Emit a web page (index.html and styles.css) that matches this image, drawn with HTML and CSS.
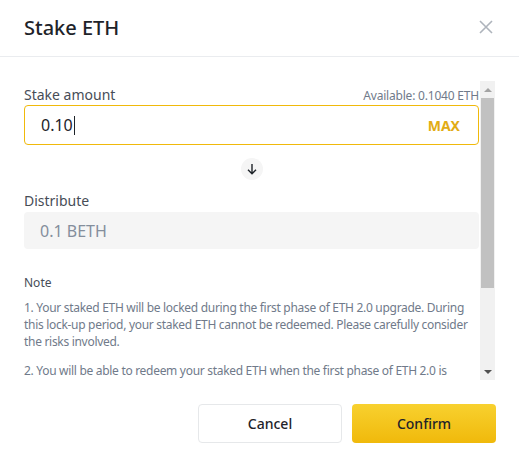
FILE: index.html
```html
<!DOCTYPE html>
<html lang="en">
<head>
<meta charset="utf-8">
<title>Stake ETH</title>
<link rel="stylesheet" href="styles.css">
</head>
<body>
<div class="dialog">
  <div class="header">
    <div class="title">Stake ETH</div>
    <svg class="close" width="14" height="14" viewBox="0 0 14 14"><path d="M1 1L13 13M13 1L1 13" stroke="#aeb4bc" stroke-width="1.6" fill="none"/></svg>
  </div>
  <div class="scroll-area">
    <div class="body">
      <div class="label-row">
        <span class="label">Stake amount</span>
        <span class="avail">Available: 0.1040 ETH</span>
      </div>
      <div class="input active">
        <span class="value">0.10<span class="caret"></span></span>
        <span class="max">MAX</span>
      </div>
      <div class="arrow-row">
        <div class="arrow">
          <svg width="12" height="12" viewBox="0 0 12 12"><path d="M6 1V10.5M2 6.8L6 10.8L10 6.8" stroke="#1e2329" stroke-width="1.4" fill="none"/></svg>
        </div>
      </div>
      <div class="label dist-label">Distribute</div>
      <div class="input readonly">0.1 BETH</div>
      <div class="note-title">Note</div>
      <p class="note first">1. Your staked ETH will be locked during the first phase of ETH 2.0 upgrade. During this lock-up period, your staked ETH cannot be redeemed. Please carefully consider the risks involved.</p>
      <p class="note">2. You will be able to redeem your staked ETH when the first phase of ETH 2.0 is completed. BETH will be distributed to your spot wallet at a 1:1 ratio.</p>
    </div>
    <div class="scrollbar">
      <div class="sb-btn"><span class="tri up"></span></div>
      <div class="sb-track"><div class="sb-thumb"></div></div>
      <div class="sb-btn"><span class="tri down"></span></div>
    </div>
  </div>
  <div class="footer">
    <button class="btn cancel">Cancel</button>
    <button class="btn confirm">Confirm</button>
  </div>
</div>
</body>
</html>
```
FILE: styles.css
```css
* { box-sizing: border-box; }
html, body { margin: 0; padding: 0; background: #fff; }
body { font-family: "Noto Sans", "Open Sans", sans-serif; color: #1e2329; }
.dialog { width: 519px; height: 465px; display: flex; flex-direction: column; }
.header {
  height: 57px; border-bottom: 1px solid #eaecef;
  display: flex; align-items: center; justify-content: space-between;
  padding: 0 26px 2px 24px;
}
.title { font-size: 20px; font-weight: 500; color: #1e2329; }
.close { display: block; }
.scroll-area { margin-top: 24px; height: 299px; display: flex; }
.body {
  width: 480px; height: 299px; overflow: hidden; padding: 4px 0 0 24px;
}
.label-row { display: flex; justify-content: space-between; align-items: flex-end; height: 20px; padding-right: 1px; }
.label { font-size: 14px; color: #474d57; line-height: 20px; }
.avail { font-size: 12px; color: #707a8a; line-height: 18px; letter-spacing: -0.2px; }
.input {
  height: 40px; border-radius: 4px; display: flex; align-items: center;
  justify-content: space-between; padding: 0 18px 0 16px; font-size: 16px;
  margin-right: 1px;
}
.input.active { border: 1px solid #f0b90b; }
.value { color: #1e2329; display: flex; align-items: center; }
.caret { display: inline-block; width: 1px; height: 19px; background: #1e2329; margin-left: 1px; }
.max { font-size: 14px; font-weight: 700; color: #e2ac14; }
.arrow-row { display: flex; justify-content: center; padding: 13px 0 11px; }
.arrow {
  width: 22px; height: 22px; border-radius: 50%; background: #f5f5f5;
  display: flex; align-items: center; justify-content: center;
}
.dist-label { margin-bottom: 1px; }
.input.readonly { background: #f5f5f5; height: 37px; padding-left: 16px; color: #848e9c; border: 0; }
.note-title { font-size: 12px; color: #474d57; margin-top: 26px; line-height: 16px; }
.note { font-size: 12px; color: #707a8a; line-height: 17px; margin: 12px 0 0; letter-spacing: -0.3px; padding-right: 1px; }
.note.first { margin-top: 8px; }
.scrollbar { width: 15px; height: 299px; background: #f1f1f1; display: flex; flex-direction: column; }
.sb-btn { height: 17px; display: flex; align-items: center; justify-content: center; }
.sb-track { flex: 1; padding: 0 1px; }
.sb-thumb { height: 190px; background: #c1c1c1; }
.tri { width: 0; height: 0; border-left: 4px solid transparent; border-right: 4px solid transparent; }
.tri.up { border-bottom: 4px solid #a3a3a3; }
.tri.down { border-top: 4px solid #505050; }
.footer { display: flex; justify-content: flex-end; gap: 10px; padding: 24px 23px 0 0; }
.btn {
  width: 144px; height: 39px; border-radius: 4px; font-family: inherit;
  font-size: 14px; font-weight: 500; cursor: pointer;
}
.cancel { background: #fff; border: 1px solid #e6e8ea; color: #1e2329; }
.confirm { background: linear-gradient(180deg, #f8d12f 0%, #f0b90b 100%); border: 0; color: #1e2329; }
```
